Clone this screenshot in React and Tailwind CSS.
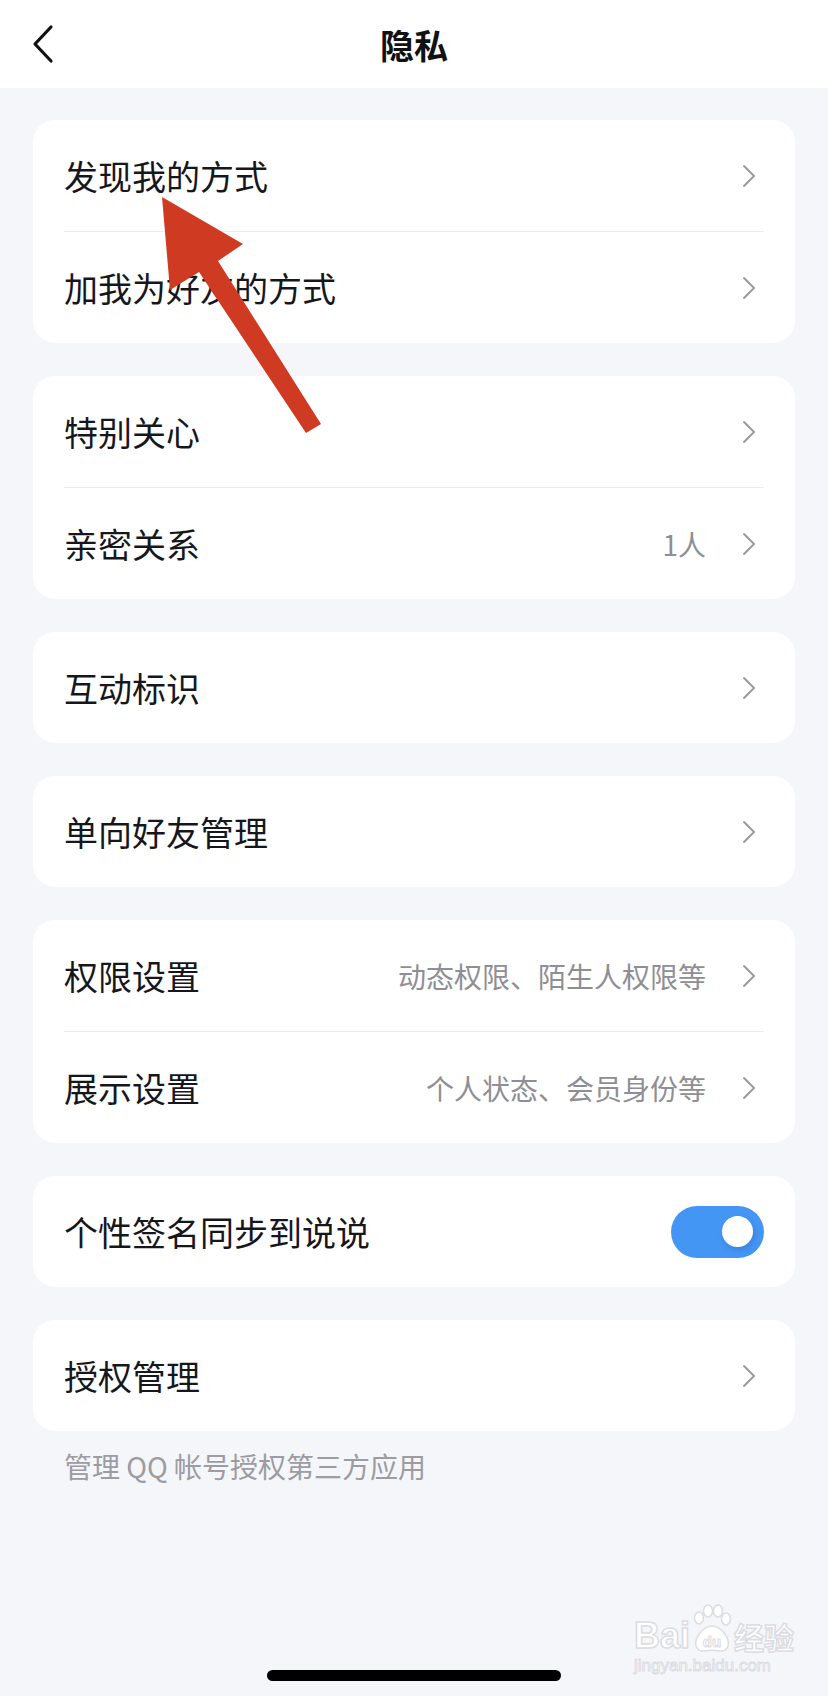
import React, { useState } from 'react';

const font = { fontFamily: '"Noto Sans CJK SC", "Noto Sans", sans-serif' };

const Chevron = () => (
    <svg width="14" height="24" viewBox="0 0 14 24" fill="none" className="shrink-0">
        <path d="M2 2 L12 12 L2 22" stroke="#9b9ba1" strokeWidth="2" strokeLinecap="round" strokeLinejoin="round" />
    </svg>
);

const Row = ({ label, value, divider }) => (
    <div>
        {divider && <div className="mx-[31px] h-px bg-[#ebebf0]" />}
        <div className="h-[111px] flex items-center pl-[31px] pr-[39px]">
            <span className="flex-1 text-[34px] text-[#16171d]">{label}</span>
            {value && <span className="text-[28px] text-[#8e8e96] mr-[36px]">{value}</span>}
            <Chevron />
        </div>
    </div>
);

const Toggle = ({ on, onChange }) => (
    <button
        onClick={() => onChange(!on)}
        className={`w-[93px] h-[52px] rounded-full flex items-center px-[11px] ${on ? 'bg-[#4496f5] justify-end' : 'bg-[#e5e5ea] justify-start'}`}
    >
        <span className="w-[31px] h-[31px] rounded-full bg-white shadow-[2px_3px_6px_rgba(0,0,0,0.12)]" />
    </button>
);

const Card = ({ children }) => (
    <div className="bg-white rounded-[22px] overflow-hidden">{children}</div>
);

const App = () => {
    const [syncSign, setSyncSign] = useState(true);

    return (
        <div className="relative w-[828px] h-[1696px] bg-[#f5f6fa] overflow-hidden" style={font}>
            {/* 顶部导航 */}
            <div className="h-[88px] bg-white flex items-center relative">
                <svg width="24" height="40" viewBox="0 0 24 40" className="ml-[31px]" fill="none">
                    <path d="M20 3 L4 20 L20 37" stroke="#111" strokeWidth="3.2" strokeLinecap="round" strokeLinejoin="round" />
                </svg>
                <div className="absolute inset-x-0 top-0 h-[88px] flex items-center justify-center pointer-events-none">
                    <span className="text-[34px] font-bold text-[#111]">隐私</span>
                </div>
            </div>

            <div className="px-[33px] pt-[32px] flex flex-col gap-[33px]">
                <Card>
                    <Row label="发现我的方式" />
                    <Row label="加我为好友的方式" divider />
                </Card>
                <Card>
                    <Row label="特别关心" />
                    <Row label="亲密关系" value="1人" divider />
                </Card>
                <Card>
                    <Row label="互动标识" />
                </Card>
                <Card>
                    <Row label="单向好友管理" />
                </Card>
                <Card>
                    <Row label="权限设置" value="动态权限、陌生人权限等" />
                    <Row label="展示设置" value="个人状态、会员身份等" divider />
                </Card>
                <Card>
                    <div className="h-[111px] flex items-center pl-[31px] pr-[31px]">
                        <span className="flex-1 text-[34px] text-[#16171d]">个性签名同步到说说</span>
                        <Toggle on={syncSign} onChange={setSyncSign} />
                    </div>
                </Card>
                <div>
                    <Card>
                        <Row label="授权管理" />
                    </Card>
                    <p className="pl-[31px] mt-[17px] text-[28px] leading-[36px] text-[#9c9ca2]">管理 QQ 帐号授权第三方应用</p>
                </div>
            </div>

            {/* 标注箭头 */}
            <svg className="absolute left-0 top-0 pointer-events-none" width="828" height="500" viewBox="0 0 828 500">
                <polygon
                    points="162,197 243,244 218,261 321,424 306,433 199,272 170,290"
                    fill="#cf3b22"
                />
            </svg>

            {/* 水印 */}
            <div className="absolute left-[634px] top-[1604px] flex flex-col pointer-events-none select-none">
                <div className="flex items-end">
                    <span className="text-[36px] leading-[36px] font-bold text-white [-webkit-text-stroke:1.5px_#dcdce2]" style={{ fontFamily: '"Liberation Sans", sans-serif' }}>Bai</span>
                    <svg width="42" height="50" viewBox="0 0 42 50" className="mx-[1px]">
                        <g fill="white" stroke="#dcdce2" strokeWidth="1.5">
                            <ellipse cx="8" cy="14" rx="4.5" ry="6" />
                            <ellipse cx="17" cy="7" rx="4.5" ry="6" />
                            <ellipse cx="27" cy="7" rx="4.5" ry="6" />
                            <ellipse cx="35" cy="15" rx="4.5" ry="6" />
                            <path d="M21 22 C12 22 3 34 5 42 C7 49 15 47 21 46 C27 47 35 49 37 42 C39 34 30 22 21 22 Z" />
                        </g>
                        <text x="21" y="43" textAnchor="middle" fontSize="15" fontWeight="bold" fill="white" stroke="#dcdce2" strokeWidth="1" fontFamily="Liberation Sans, sans-serif">du</text>
                    </svg>
                    <span className="text-[30px] leading-[36px] font-bold text-white [-webkit-text-stroke:1.5px_#dcdce2]">经验</span>
                </div>
                <span className="text-[17px] leading-[20px] text-white [-webkit-text-stroke:1px_#dcdce2] mt-[2px]" style={{ fontFamily: '"Liberation Sans", sans-serif' }}>jingyan.baidu.com</span>
            </div>

            {/* Home 指示条 */}
            <div className="absolute left-[267px] bottom-[15px] w-[294px] h-[11px] rounded-full bg-black" />
        </div>
    );
};

export default App;
